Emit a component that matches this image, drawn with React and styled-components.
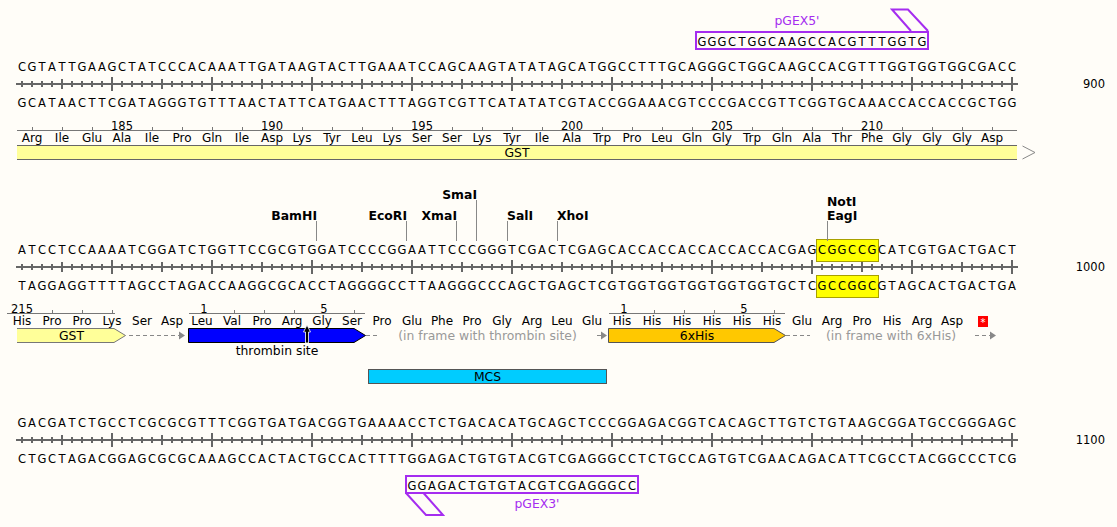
import React from "react";
import styled, { createGlobalStyle } from "styled-components";

const INK = "#000";
const LINE = "#777";
const PURPLE = "#a52df0";

const COMPLEMENT = { A: "T", T: "A", G: "C", C: "G" };
const complement = (seq) => seq.split("").map((base) => COMPLEMENT[base]).join("");

const ROW_1 = "CGTATTGAAGCTATCCCACAAATTGATAAGTACTTGAAATCCAGCAAGTATATAGCATGGCCTTTGCAGGGCTGGCAAGCCACGTTTGGTGGTGGCGACC";
const ROW_2 = "ATCCTCCAAAATCGGATCTGGTTCCGCGTGGATCCCCGGAATTCCCGGGTCGACTCGAGCACCACCACCACCACCACGAGCGGCCGCATCGTGACTGACT";
const ROW_3 = "GACGATCTGCCTCGCGCGTTTCGGTGATGACGGTGAAAACCTCTGACACATGCAGCTCCCGGAGACGGTCACAGCTTGTCTGTAAGCGGATGCCGGGAGC";

const AA_1 = "Arg Ile Glu Ala Ile Pro Gln Ile Asp Lys Tyr Leu Lys Ser Ser Lys Tyr Ile Ala Trp Pro Leu Gln Gly Trp Gln Ala Thr Phe Gly Gly Gly Asp".split(" ");
const AA_2 = "His Pro Pro Lys Ser Asp Leu Val Pro Arg Gly Ser Pro Glu Phe Pro Gly Arg Leu Glu His His His His His His Glu Arg Pro His Arg Asp".split(" ");
const NUMBERS_1 = { 3: 185, 8: 190, 13: 195, 18: 200, 23: 205, 28: 210 };

const GlobalStyle = createGlobalStyle`
  html, body {
    margin: 0;
    background: #fffdf8;
  }
  body {
    font-family: "DejaVu Sans", sans-serif;
    font-size: 12.4px;
    color: ${INK};
  }
`;

const Page = styled.div`
  width: 1117px;
  height: 527px;
  padding: 8px 0 0 17px;
  box-sizing: border-box;
  overflow: hidden;
`;

const Bases = styled.div`
  display: grid;
  grid-template-columns: repeat(${(p) => p.$count}, 10px);
  height: 18px;
  line-height: 18px;
  font-size: 11.5px;
  text-align: center;
`;

const StrandWrap = styled.div`
  position: relative;
  isolation: isolate;
  margin-top: ${(p) => p.$top || 0}px;
`;

const Highlight = styled.div`
  position: absolute;
  z-index: -1;
  left: 799px;
  top: -2px;
  width: 63px;
  height: 23px;
  box-sizing: border-box;
  background: #ffff00;
  border: 1px solid #a8a000;
`;

const RulerRow = styled.div`
  display: flex;
  justify-content: space-between;
  align-items: center;
  width: 1089px;
  height: 16px;
  margin-left: -1px;
`;

const PositionLabel = styled.span`
  font-size: 11.5px;
  line-height: 16px;
`;

const PrimerGrid = styled.div`
  display: grid;
  grid-template-columns: repeat(100, 10px);
  margin-top: ${(p) => p.$top || 0}px;
`;

const PrimerHead = styled.div`
  grid-row: ${(p) => p.$row};
  grid-column: ${(p) => p.$col} / span ${(p) => p.$span};
  height: ${(p) => p.$height}px;
  text-align: center;
  color: ${PURPLE};
  line-height: ${(p) => p.$line}px;
`;

const PrimerHook = styled.svg`
  display: block;
  grid-row: ${(p) => p.$row};
  grid-column: ${(p) => p.$col} / span 5;
  overflow: visible;
`;

const PrimerBox = styled.div`
  grid-row: ${(p) => p.$row};
  grid-column: ${(p) => p.$col} / span 23;
  margin: 0 -2px;
  border: 2px solid ${PURPLE};
  height: 19px;
  box-sizing: border-box;
  line-height: 15px;
`;

const EnzymeMap = styled.div`
  position: relative;
  z-index: 1;
  height: 54px;
  margin-top: 27px;
`;

const Site = styled.div`
  position: absolute;
  left: ${(p) => p.$x}px;
  bottom: 0;
  width: 0;
  display: flex;
  flex-direction: column;
  align-items: ${(p) => (p.$side === "left" ? "flex-end" : "flex-start")};
`;

const SiteName = styled.span`
  font-weight: 700;
  line-height: 14px;
  white-space: nowrap;
`;

const SiteStick = styled.span`
  flex: none;
  width: 1px;
  height: ${(p) => p.$height}px;
  margin-top: -2px;
  background: #888;
`;

const NumberRow = styled.div`
  display: grid;
  grid-template-columns: repeat(100, 10px);
  height: 12px;
  margin-top: 7px;
`;

const NumberSegment = styled.div`
  grid-row: 1;
  grid-column: ${(p) => p.$col} / span 2;
  display: flex;
  width: ${(p) => p.$width}px;
  height: 12px;
  margin-left: ${(p) => p.$inset || 0}px;
  box-sizing: border-box;
  border-bottom: 1px solid ${LINE};
`;

const NumberCell = styled.div`
  position: relative;
  flex: none;
  width: 30px;
  text-align: center;
  font-size: 11.5px;
  line-height: 12px;
  margin-top: 1px;
`;

const Tick = styled.span`
  position: absolute;
  left: 15px;
  bottom: -1px;
  width: 1px;
  height: 4px;
  background: ${LINE};
`;

const AaRow = styled.div`
  display: flex;
  height: 14px;
  line-height: 14px;
  font-size: 12px;
  margin-left: ${(p) => p.$shift || 0}px;
`;

const Aa = styled.span`
  flex: none;
  width: 30px;
  text-align: center;
`;

const StopMark = styled.span`
  display: block;
  width: 10px;
  height: 11px;
  margin: 2px 0 0 11px;
  background: #ff0000;
  color: #fff;
  line-height: 13px;
  font-size: 10px;
`;

const ContinuedRow = styled.div`
  display: flex;
  align-items: center;
`;

const LongBar = styled.div`
  width: 1000px;
  height: 15px;
  box-sizing: border-box;
  background: #ffff99;
  border-top: 1px solid #666;
  border-bottom: 1px solid #666;
  text-align: center;
  line-height: 13px;
`;

const Chevron = styled.svg`
  display: block;
  margin-left: 5px;
`;

const FeatureRow = styled.div`
  display: flex;
  height: 15px;
`;

const BarShell = styled.div`
  position: relative;
  flex: none;
  width: ${(p) => p.$width}px;
  height: 15px;
  line-height: 15px;
  text-align: center;
`;

const BarShape = styled.svg`
  position: absolute;
  left: 0;
  top: 0;
`;

const BarText = styled.span`
  position: relative;
`;

const CutMark = styled.svg`
  position: absolute;
  left: ${(p) => p.$x}px;
  top: -3px;
  overflow: visible;
`;

const LinkArrow = styled.svg`
  display: block;
  flex: none;
`;

const FrameNote = styled.span`
  flex: none;
  width: ${(p) => p.$width}px;
  text-align: center;
  color: #999;
  line-height: 15px;
`;

const SiteCaption = styled.div`
  width: 178px;
  margin-left: 171px;
  height: 15px;
  line-height: 16px;
  text-align: center;
`;

const Mcs = styled.div`
  width: 239px;
  height: 15px;
  margin: 11px 0 0 351px;
  box-sizing: border-box;
  background: #00ccff;
  border: 1px solid #555;
  text-align: center;
  line-height: 13px;
`;

function Letters({ seq }) {
  return (
    <Bases $count={seq.length}>
      {seq.split("").map((base, i) => (
        <span key={i}>{base}</span>
      ))}
    </Bases>
  );
}

function Ruler() {
  const ticks = [];
  for (let i = 0; i < 100; i++) {
    const half = (i + 1) % 10 === 0 ? 7 : (i + 1) % 5 === 0 ? 5 : 3;
    ticks.push(<rect key={i} x={5 + 10 * i} y={8 - half} width="2" height={half * 2} />);
  }
  return (
    <svg width="1002" height="16" viewBox="0 0 1002 16" fill="#666" shapeRendering="crispEdges">
      <rect x="0" y="7" width="1002" height="2" />
      {ticks}
    </svg>
  );
}

function DnaRows({ seq, position, highlight, top }) {
  return (
    <>
      <StrandWrap $top={top}>
        {highlight && <Highlight />}
        <Letters seq={seq} />
      </StrandWrap>
      <RulerRow>
        <Ruler />
        <PositionLabel>{position}</PositionLabel>
      </RulerRow>
      <StrandWrap $top={2}>
        {highlight && <Highlight />}
        <Letters seq={complement(seq)} />
      </StrandWrap>
    </>
  );
}

function EnzymeLabel({ names, x, stick, side }) {
  return (
    <Site $x={x} $side={side}>
      {names.map((name) => (
        <SiteName key={name}>{name}</SiteName>
      ))}
      <SiteStick $height={stick} />
    </Site>
  );
}

function NumberedLine({ col, width, inset, cells }) {
  return (
    <NumberSegment $col={col} $width={width} $inset={inset}>
      {cells.map((label, i) => (
        <NumberCell key={i}>{label || <Tick />}</NumberCell>
      ))}
    </NumberSegment>
  );
}

function ArrowBar({ width, fill, stroke, open, cut, children }) {
  const tip = width - 12;
  const right = `${tip},0.5 ${width - 0.5},7.5 ${tip},14.5`;
  return (
    <BarShell $width={width}>
      <BarShape width={width} height="15">
        {open ? (
          <>
            <polygon points={`0,0.5 ${right} 0,14.5`} fill={fill} />
            <polyline points={`0,0.5 ${right} 0,14.5`} fill="none" stroke={stroke} />
          </>
        ) : (
          <polygon points={`0.5,0.5 ${right} 0.5,14.5`} fill={fill} stroke={stroke} />
        )}
      </BarShape>
      <BarText>{children}</BarText>
      {cut && (
        <CutMark $x={cut} width="8" height="19" viewBox="0 0 8 19">
          <path d="M2.5 7H0.5L4 0L7.5 7H5.5V18H2.5Z" fill="#000" stroke="#fff" strokeWidth="0.8" />
        </CutMark>
      )}
    </BarShell>
  );
}

function Link({ width, from = 0, to, arrow }) {
  return (
    <LinkArrow width={width} height="15" viewBox={`0 0 ${width} 15`}>
      <line x1={from} x2={arrow ? to - 5 : to} y1="7.5" y2="7.5" stroke="#888" strokeDasharray="4 3" />
      {arrow && <polygon points={`${to - 6},3.5 ${to},7.5 ${to - 6},11.5`} fill="#888" />}
    </LinkArrow>
  );
}

export default function App() {
  const numberCells1 = AA_1.map((_, i) => NUMBERS_1[i] || null);
  return (
    <>
      <GlobalStyle />
      <Page>
        <PrimerGrid>
          <PrimerHead $row={1} $col={69} $span={20} $height={23} $line={25}>
            pGEX5'
          </PrimerHead>
          <PrimerHook $row={1} $col={88} width="50" height="23" viewBox="0 0 50 23">
            <path d="M24 23L5 1.5H21L41 23" fill="none" stroke={PURPLE} strokeWidth="2" />
          </PrimerHook>
          <PrimerBox $col={69} $row={2}>
            <Letters seq="GGGCTGGCAAGCCACGTTTGGTG" />
          </PrimerBox>
        </PrimerGrid>

        <DnaRows seq={ROW_1} position="900" top={8} />

        <NumberRow>
          <NumberedLine col={1} width={1000} cells={numberCells1} />
        </NumberRow>
        <AaRow>
          {AA_1.map((aa, i) => (
            <Aa key={i}>{aa}</Aa>
          ))}
        </AaRow>
        <ContinuedRow>
          <LongBar>GST</LongBar>
          <Chevron width="14" height="15" viewBox="0 0 14 15">
            <path d="M0.5 1L13 7.5L0.5 14" fill="none" stroke="#888" />
          </Chevron>
        </ContinuedRow>

        <EnzymeMap>
          <EnzymeLabel names={["BamHI"]} x={300} stick={20} side="left" />
          <EnzymeLabel names={["EcoRI"]} x={390} stick={20} side="left" />
          <EnzymeLabel names={["XmaI"]} x={440} stick={20} side="left" />
          <EnzymeLabel names={["SmaI"]} x={460} stick={41} side="left" />
          <EnzymeLabel names={["SalI"]} x={490} stick={20} side="right" />
          <EnzymeLabel names={["XhoI"]} x={540} stick={20} side="right" />
          <EnzymeLabel names={["NotI", "EagI"]} x={810} stick={20} side="right" />
        </EnzymeMap>

        <DnaRows seq={ROW_2} position="1000" highlight />

        <NumberRow>
          <NumberedLine col={1} width={108} inset={-10} cells={["215", null, null, null]} />
          <NumberedLine col={18} width={176} inset={2} cells={["1", null, null, null, "5", null]} />
          <NumberedLine col={60} width={176} inset={2} cells={["1", null, null, null, "5", null]} />
        </NumberRow>
        <AaRow $shift={-10}>
          {AA_2.map((aa, i) => (
            <Aa key={i}>{aa}</Aa>
          ))}
          <Aa>
            <StopMark>*</StopMark>
          </Aa>
        </AaRow>
        <FeatureRow>
          <ArrowBar width={109} fill="#ffff99" stroke="#777" open>
            GST
          </ArrowBar>
          <Link width={62} from={3} to={59} arrow />
          <ArrowBar width={178} fill="#0000ff" stroke="#000" cut={115} />
          <Link width={12} to={12} />
          <FrameNote $width={219}>(in frame with thrombin site)</FrameNote>
          <Link width={11} to={10} arrow />
          <ArrowBar width={178} fill="#ffc800" stroke="#555">
            6xHis
          </ArrowBar>
          <Link width={24} to={24} />
          <FrameNote $width={162}>(in frame with 6xHis)</FrameNote>
          <Link width={24} from={3} to={24} arrow />
        </FeatureRow>
        <SiteCaption>thrombin site</SiteCaption>
        <Mcs>MCS</Mcs>

        <DnaRows seq={ROW_3} position="1100" top={30} />

        <PrimerGrid $top={7}>
          <PrimerBox $col={40} $row={1}>
            <Letters seq="GGAGACTGTGTACGTCGAGGGCC" />
          </PrimerBox>
          <PrimerHook $row={2} $col={40} width="50" height="24" viewBox="0 0 50 24">
            <path d="M-1 -1L19 21H36L16.5 -1" fill="none" stroke={PURPLE} strokeWidth="2" />
          </PrimerHook>
          <PrimerHead $row={2} $col={45} $span={16} $height={22} $line={20}>
            pGEX3'
          </PrimerHead>
        </PrimerGrid>
      </Page>
    </>
  );
}
